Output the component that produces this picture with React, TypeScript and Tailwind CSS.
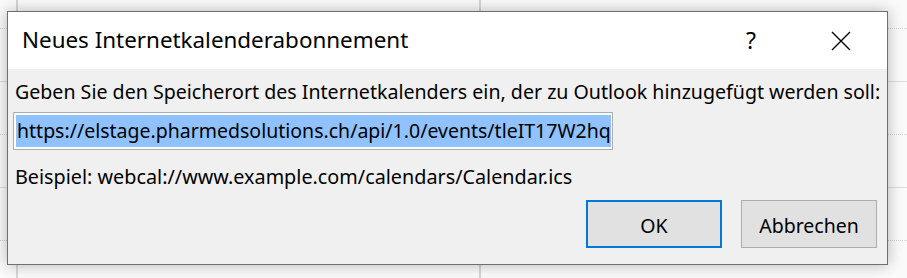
export default function App() {
  return (
    <div className="relative w-[907px] h-[278px] overflow-hidden bg-[#fafafa] font-['Noto_Sans',sans-serif] text-black">
      {/* Outlook calendar grid behind the dialog */}
      <div className="absolute left-[16px] top-0 h-full w-[2px] bg-[#d6d6d6]" />
      <div className="absolute left-[479px] top-0 h-full w-[2px] bg-[#d6d6d6]" />
      <div className="absolute left-0 top-[81px] w-full h-px bg-[#dcdcdc]" />
      <div className="absolute left-0 top-[187px] w-full h-px bg-[#dcdcdc]" />
      <div className="absolute left-0 top-[28px] w-full h-px border-t border-dotted border-[#d0d0d0]" />
      <div className="absolute left-0 top-[134px] w-full h-px border-t border-dotted border-[#d0d0d0]" />
      <div className="absolute left-0 top-[240px] w-full h-px border-t border-dotted border-[#d0d0d0]" />

      {/* Dialog */}
      <div className="relative ml-[7px] mt-[11px] w-[881px] h-[254px] border border-[#6f6f6f] bg-[#f0f0f0] shadow-[0_0_14px_rgba(0,0,0,0.28)] flex flex-col">
        <div className="h-[57px] bg-white flex items-center pl-[14px]">
          <span className="text-[22.4px] leading-none whitespace-nowrap">Neues Internetkalenderabonnement</span>
          <span className="ml-auto text-[23px] leading-none mr-[75px]">?</span>
          <svg className="mr-[36px]" width="20" height="20" viewBox="0 0 20 20">
            <path d="M1 1 L19 19 M19 1 L1 19" stroke="#000" strokeWidth="1.4" fill="none" />
          </svg>
        </div>

        <div className="flex-1 flex flex-col pl-[7px] pr-[10px]">
          <p className="mt-[11px] text-[19.6px] leading-[24px] whitespace-nowrap">
            Geben Sie den Speicherort des Internetkalenders ein, der zu Outlook hinzugefügt werden soll:
          </p>
          <div className="mt-[8px] ml-[-2px] w-[600px] h-[38px] border border-[#adadad] bg-white p-[2px] flex">
            <span className="flex-1 bg-[#8fc2ff] text-[19.5px] leading-[32px] pl-[1px] whitespace-nowrap">
              https://elstage.pharmedsolutions.ch/api/1.0/events/tleIT17W2hq
            </span>
          </div>
          <p className="mt-[15px] text-[19.8px] leading-[24px] whitespace-nowrap">
            Beispiel: webcal://www.example.com/calendars/Calendar.ics
          </p>
          <div className="mt-[11px] flex justify-end gap-[19px]">
            <button className="w-[136px] h-[48px] pt-[4px] border-2 border-[#0078d7] bg-[#e1e1e1] text-[19.5px]">OK</button>
            <button className="w-[136px] h-[48px] pt-[4px] border border-[#adadad] bg-[#e1e1e1] text-[19.5px]">Abbrechen</button>
          </div>
        </div>
      </div>
    </div>
  );
}
